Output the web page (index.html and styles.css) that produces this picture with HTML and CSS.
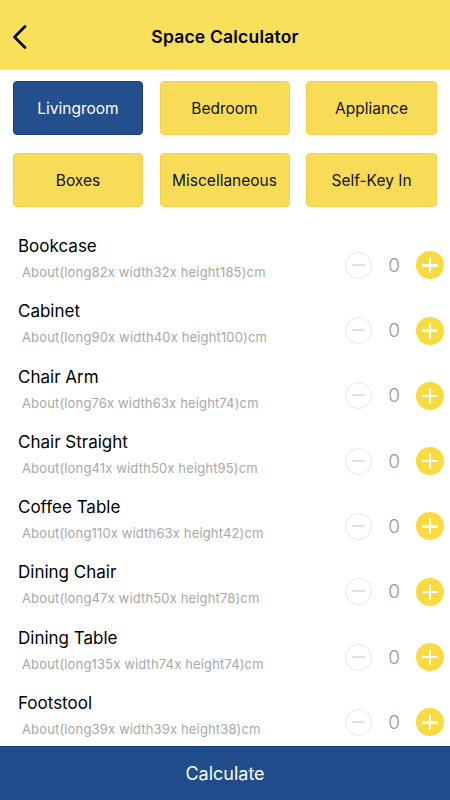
FILE: index.html
```html
<!DOCTYPE html>
<html>
<head>
<meta charset="utf-8">
<link rel="stylesheet" href="styles.css">
</head>
<body>
<div class="app">
  <header class="header">
    <button class="back" aria-label="Back">
      <svg width="16" height="24" viewBox="0 0 16 24"><path d="M13 1.5 L2.5 12 L13 22.5" fill="none" stroke="#000" stroke-width="2.6" stroke-linecap="round" stroke-linejoin="round"/></svg>
    </button>
    <h1 class="title">Space Calculator</h1>
  </header>

  <nav class="cats">
    <button class="cat active">Livingroom</button>
    <button class="cat">Bedroom</button>
    <button class="cat">Appliance</button>
    <button class="cat">Boxes</button>
    <button class="cat">Miscellaneous</button>
    <button class="cat">Self-Key In</button>
  </nav>

  <main class="list">
    <div class="item"><div class="info"><div class="name">Bookcase</div><div class="dims">About(long82x width32x height185)cm</div></div><div class="ctrl"><span class="minus"></span><span class="qty">0</span><span class="plus"></span></div></div>
    <div class="item"><div class="info"><div class="name">Cabinet</div><div class="dims">About(long90x width40x height100)cm</div></div><div class="ctrl"><span class="minus"></span><span class="qty">0</span><span class="plus"></span></div></div>
    <div class="item"><div class="info"><div class="name">Chair Arm</div><div class="dims">About(long76x width63x height74)cm</div></div><div class="ctrl"><span class="minus"></span><span class="qty">0</span><span class="plus"></span></div></div>
    <div class="item"><div class="info"><div class="name">Chair Straight</div><div class="dims">About(long41x width50x height95)cm</div></div><div class="ctrl"><span class="minus"></span><span class="qty">0</span><span class="plus"></span></div></div>
    <div class="item"><div class="info"><div class="name">Coffee Table</div><div class="dims">About(long110x width63x height42)cm</div></div><div class="ctrl"><span class="minus"></span><span class="qty">0</span><span class="plus"></span></div></div>
    <div class="item"><div class="info"><div class="name">Dining Chair</div><div class="dims">About(long47x width50x height78)cm</div></div><div class="ctrl"><span class="minus"></span><span class="qty">0</span><span class="plus"></span></div></div>
    <div class="item"><div class="info"><div class="name">Dining Table</div><div class="dims">About(long135x width74x height74)cm</div></div><div class="ctrl"><span class="minus"></span><span class="qty">0</span><span class="plus"></span></div></div>
    <div class="item"><div class="info"><div class="name">Footstool</div><div class="dims">About(long39x width39x height38)cm</div></div><div class="ctrl"><span class="minus"></span><span class="qty">0</span><span class="plus"></span></div></div>
  </main>

  <footer class="calc">Calculate</footer>
</div>
</body>
</html>
```

FILE: styles.css
```css
* { box-sizing: border-box; }
html, body { margin: 0; padding: 0; }
body {
  font-family: Inter, "Liberation Sans", Arial, sans-serif;
  background: #fff;
  color: #000;
}
.app {
  width: 450px;
  height: 800px;
  display: flex;
  flex-direction: column;
  overflow: hidden;
}
.header {
  height: 70px;
  flex: none;
  background: #f9e05a;
  border-bottom: 1px solid #dcdcdc;
  display: flex;
  align-items: center;
  justify-content: center;
  position: relative;
}
.back {
  position: absolute;
  left: 12px;
  top: 25px;
  padding: 0;
  border: 0;
  background: none;
  display: flex;
}
.title {
  margin: 0;
  font-size: 17.5px;
  font-weight: 600;
  letter-spacing: 0.2px;
  padding-top: 4px;
}
.cats {
  flex: none;
  display: grid;
  grid-template-columns: 130px 130px 131px;
  column-gap: 16.5px;
  row-gap: 18px;
  padding: 11px 13px 0 13px;
}
.cat {
  height: 54px;
  border-radius: 4px;
  border: 1px solid #f0d24e;
  background: #f8dc58;
  font-family: inherit;
  font-size: 15.5px;
  color: #111;
  padding: 0;
}
.cat.active {
  background: #234f8c;
  border-color: #1b3f75;
  color: #fff;
}
.list {
  flex: 1;
  overflow: hidden;
  padding-top: 20px;
}
.item {
  height: 65.3px;
  display: flex;
  justify-content: space-between;
  align-items: flex-end;
  padding: 0 6px 13px 18px;
}
.info {
  align-self: flex-start;
  padding-top: 8px;
}
.name {
  font-size: 17px;
  line-height: 22px;
}
.dims {
  margin-top: 7px;
  padding-left: 4px;
  font-size: 13px;
  letter-spacing: 0.15px;
  line-height: 16px;
  color: #a8a8a8;
}
.ctrl {
  display: flex;
  align-items: center;
  height: 28px;
}
.minus {
  width: 27px;
  height: 27px;
  border-radius: 50%;
  border: 1.5px solid #e6e6e6;
  position: relative;
}
.minus::after {
  content: "";
  position: absolute;
  left: 6px;
  right: 6px;
  top: 11px;
  height: 2px;
  background: #e3e3e3;
}
.qty {
  width: 44px;
  text-align: center;
  font-size: 19px;
  color: #999;
  font-weight: 300;
}
.plus {
  width: 28px;
  height: 28px;
  border-radius: 50%;
  background: #f9da41;
  position: relative;
}
.plus::before, .plus::after {
  content: "";
  position: absolute;
  background: #fff;
  border-radius: 1px;
}
.plus::before {
  left: 6px; right: 6px; top: 12.75px; height: 2.5px;
}
.plus::after {
  top: 6px; bottom: 6px; left: 12.75px; width: 2.5px;
}
.calc {
  flex: none;
  height: 54px;
  background: #214c8c;
  border-top: 1px solid #173a7a;
  color: #fff;
  display: flex;
  align-items: center;
  justify-content: center;
  font-size: 18px;
}
```
